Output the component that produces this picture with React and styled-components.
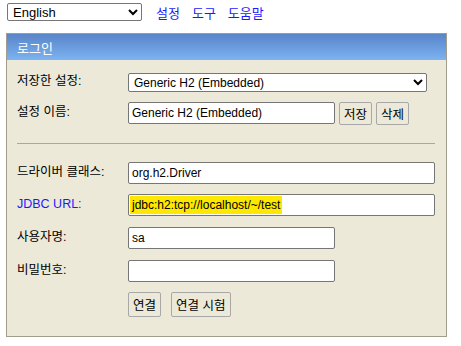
import React from "react";
import styled, { createGlobalStyle } from "styled-components";

const GlobalStyle = createGlobalStyle`
  body {
    margin: 0;
    background: #ffffff;
    font-family: "Liberation Sans", "Noto Sans CJK KR", Arial, sans-serif;
    font-size: 12.5px;
    color: #000;
  }
`;

const TopBar = styled.div`
  display: flex;
  align-items: center;
  height: 18px;
  padding: 3px 0 0 7px;
`;

const LangSelect = styled.select`
  width: 135px;
  height: 18px;
  font-family: "Liberation Sans", Arial, sans-serif;
  font-size: 13px;
  border: 1px solid #767676;
  border-radius: 2px;
  background: #fff;
  padding: 0 1px;
  margin-right: 10px;
`;

const TopLink = styled.a`
  color: #1a1aff;
  text-decoration: none;
  font-size: 13px;
  margin-left: ${p => p.$gap || 14}px;
  cursor: pointer;
`;

const Panel = styled.div`
  margin: 12px 0 0 6px;
  width: 439px;
  border: 1px solid #a19d8d;
  background: #ece9d8;
`;

const PanelHeader = styled.div`
  height: 26px;
  display: flex;
  align-items: center;
  padding-left: 10px;
  color: #ffffff;
  font-size: 13px;
  background: linear-gradient(to bottom, #5985c9, #7cb3f1);
`;

const PanelBody = styled.div`
  padding: 13px 10px 19px 10px;
`;

const Row = styled.div`
  display: flex;
  align-items: flex-start;
  margin-top: ${p => p.$top || 0}px;
`;

const Label = styled.div`
  width: 111px;
  flex: none;
  padding-top: ${p => p.$pt ?? 3}px;
  color: ${p => (p.$link ? "#1a1aff" : "#000")};
  line-height: 15px;
`;

const Select = styled.select`
  width: ${p => p.$w}px;
  height: 19px;
  font-family: "Liberation Sans", Arial, sans-serif;
  font-size: 12px;
  border: 1px solid #767676;
  border-radius: 2px;
  background: #fff;
  padding: 0 1px;
`;

const Input = styled.input`
  box-sizing: border-box;
  width: ${p => p.$w}px;
  height: 22px;
  font-family: "Liberation Sans", Arial, sans-serif;
  font-size: 12px;
  border: 1px solid #767676;
  border-radius: 2px;
  background: #fff;
  padding: 1px 3px;
  outline: none;
`;

const FakeInput = styled.div`
  box-sizing: border-box;
  width: ${p => p.$w}px;
  height: 22px;
  font-family: "Liberation Sans", Arial, sans-serif;
  font-size: 12px;
  border: 1px solid #767676;
  border-radius: 2px;
  background: #fff;
  padding: 1px 1px;
  display: flex;
  align-items: stretch;
`;

const Highlight = styled.span`
  background: #ffe800;
  display: flex;
  align-items: center;
  padding: 0 2px;
`;

const Button = styled.button`
  height: ${p => p.$h || 23}px;
  margin-left: ${p => p.$ml || 0}px;
  padding: 0 4px;
  font-family: "Liberation Sans", "Noto Sans CJK KR", Arial, sans-serif;
  font-size: 12.5px;
  color: #000;
  background: #ece9d8;
  border: 1px solid #a8a8a8;
  border-radius: 2px;
`;

const Divider = styled.div`
  height: 1px;
  background: #a8a8a0;
  margin: 18px 0 0 0;
  width: 418px;
`;

export default function App() {
  return (
    <>
      <GlobalStyle />
      <TopBar>
        <LangSelect defaultValue="en">
          <option value="en">English</option>
        </LangSelect>
        <TopLink $gap={4}>설정</TopLink>
        <TopLink $gap={12}>도구</TopLink>
        <TopLink $gap={12}>도움말</TopLink>
      </TopBar>
      <Panel>
        <PanelHeader>로그인</PanelHeader>
        <PanelBody>
          <Row>
            <Label $pt={1}>저장한 설정:</Label>
            <Select $w={299} defaultValue="g">
              <option value="g">Generic H2 (Embedded)</option>
            </Select>
          </Row>
          <Row $top={10}>
            <Label>설정 이름:</Label>
            <Input $w={207} defaultValue="Generic H2 (Embedded)" />
            <Button $ml={4}>저장</Button>
            <Button $ml={4}>삭제</Button>
          </Row>
          <Divider />
          <Row $top={18}>
            <Label>드라이버 클래스:</Label>
            <Input $w={307} defaultValue="org.h2.Driver" />
          </Row>
          <Row $top={10}>
            <Label $link>JDBC URL:</Label>
            <FakeInput $w={307}>
              <Highlight>jdbc:h2:tcp://localhost/~/test</Highlight>
            </FakeInput>
          </Row>
          <Row $top={11}>
            <Label>사용자명:</Label>
            <Input $w={207} defaultValue="sa" />
          </Row>
          <Row $top={11}>
            <Label>비밀번호:</Label>
            <Input $w={207} type="password" defaultValue="" />
          </Row>
          <Row $top={10}>
            <Label />
            <Button $h={25}>연결</Button>
            <Button $h={25} $ml={10}>연결 시험</Button>
          </Row>
        </PanelBody>
      </Panel>
    </>
  );
}
